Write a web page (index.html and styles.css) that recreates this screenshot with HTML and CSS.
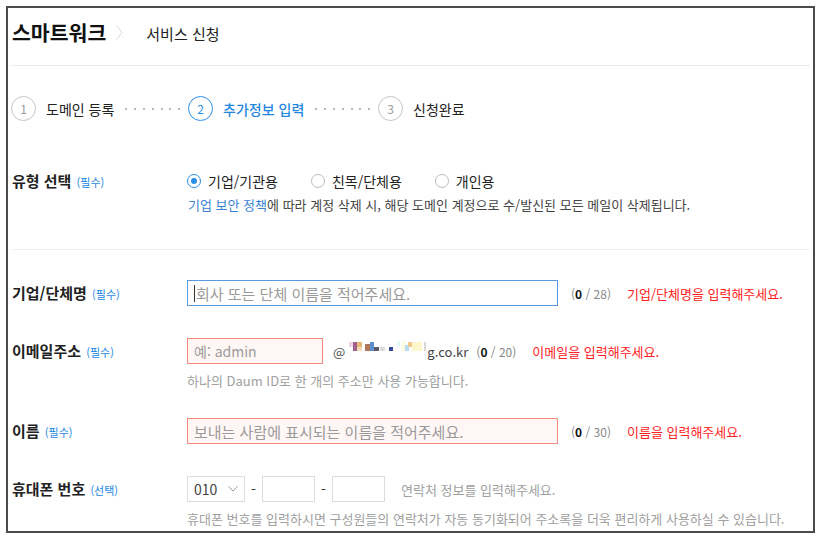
FILE: index.html
```html
<!DOCTYPE html>
<html lang="ko">
<head>
<meta charset="utf-8">
<title>스마트워크 - 서비스 신청</title>
<link rel="stylesheet" href="styles.css">
</head>
<body>
<div class="frame">
  <header class="hdr">
    <h1 class="brand">스마트워크</h1>
    <svg class="chev" width="7" height="15" viewBox="0 0 7 15"><polyline points="0.5,0.5 6,7.5 0.5,14.5" fill="none" stroke="#d9d9d9" stroke-width="1"/></svg>
    <span class="svc">서비스 신청</span>
  </header>

  <ol class="steps">
    <li class="step"><span class="num">1</span><span class="slabel">도메인 등록</span></li>
    <li class="dots"><i></i><i></i><i></i><i></i><i></i><i></i><i></i></li>
    <li class="step on"><span class="num">2</span><span class="slabel">추가정보 입력</span></li>
    <li class="dots"><i></i><i></i><i></i><i></i><i></i><i></i><i></i></li>
    <li class="step"><span class="num">3</span><span class="slabel">신청완료</span></li>
  </ol>

  <section class="type">
    <div class="lbl lbl-type">유형 선택 <em>(필수)</em></div>
    <div class="fld">
      <div class="radios">
        <label class="radio on"><span class="rb"></span>기업/기관용</label>
        <label class="radio"><span class="rb"></span>친목/단체용</label>
        <label class="radio"><span class="rb"></span>개인용</label>
      </div>
      <p class="desc"><span class="link">기업 보안 정책</span>에 따라 계정 삭제 시, 해당 도메인 계정으로 수/발신된 모든 메일이 삭제됩니다.</p>
    </div>
  </section>

  <div class="row r1">
    <div class="lbl">기업/단체명 <em>(필수)</em></div>
    <div class="fld">
      <div class="line">
        <div class="box wide focus"><span class="caret"></span><span class="ph">회사 또는 단체 이름을 적어주세요.</span></div>
        <span class="cnt">(<b>0</b> / 28)</span>
        <span class="errmsg">기업/단체명을 입력해주세요.</span>
      </div>
    </div>
  </div>

  <div class="row r2">
    <div class="lbl">이메일주소 <em>(필수)</em></div>
    <div class="fld">
      <div class="line">
        <div class="box email err"><span class="ph">예: admin</span></div>
        <span class="at">@</span>
        <svg class="blur" width="80" height="16" viewBox="0 0 80 16">
          <rect x="2" y="2" width="5" height="5" fill="#ecd4e4"/>
          <rect x="6" y="2" width="4" height="9" fill="#a0608a"/>
          <rect x="10" y="2" width="5" height="5" fill="#e8b878"/>
          <rect x="10" y="7" width="5" height="4" fill="#f2dcb8"/>
          <rect x="18" y="4" width="5" height="7" fill="#b07a5a"/>
          <rect x="23" y="2" width="4" height="9" fill="#5b8fd0"/>
          <rect x="27" y="7" width="5" height="4" fill="#5a5a6a"/>
          <rect x="33" y="7" width="5" height="4" fill="#dcdcdc"/>
          <rect x="42" y="7" width="4" height="4" fill="#3c4a9a"/>
          <rect x="50" y="2" width="3" height="5" fill="#e0f4fa"/>
          <rect x="55" y="2" width="3" height="9" fill="#fffbe0"/>
          <rect x="58" y="5" width="4" height="6" fill="#b8dcf0"/>
          <rect x="61" y="2" width="6" height="5" fill="#f0c890"/>
          <rect x="65" y="2" width="10" height="9" fill="#fff6cc"/>
          <rect x="77" y="2" width="2" height="9" fill="#d8d8d8"/>
        </svg>
        <span class="dom">g.co.kr</span>
        <span class="cnt cnt-e">(<b>0</b> / 20)</span>
        <span class="errmsg">이메일을 입력해주세요.</span>
      </div>
      <p class="help">하나의 Daum ID로 한 개의 주소만 사용 가능합니다.</p>
    </div>
  </div>

  <div class="row r3">
    <div class="lbl">이름 <em>(필수)</em></div>
    <div class="fld">
      <div class="line">
        <div class="box wide err"><span class="ph">보내는 사람에 표시되는 이름을 적어주세요.</span></div>
        <span class="cnt">(<b>0</b> / 30)</span>
        <span class="errmsg">이름을 입력해주세요.</span>
      </div>
    </div>
  </div>

  <div class="row r4">
    <div class="lbl">휴대폰 번호 <em>(선택)</em></div>
    <div class="fld">
      <div class="line">
        <div class="sel"><span>010</span><svg width="10" height="6" viewBox="0 0 10 6"><polyline points="0.5,0.5 5,5 9.5,0.5" fill="none" stroke="#999" stroke-width="1"/></svg></div>
        <span class="dash">-</span>
        <div class="box tel"></div>
        <span class="dash">-</span>
        <div class="box tel"></div>
        <span class="phhelp">연락처 정보를 입력해주세요.</span>
      </div>
      <p class="help">휴대폰 번호를 입력하시면 구성원들의 연락처가 자동 동기화되어 주소록을 더욱 편리하게 사용하실 수 있습니다.</p>
    </div>
  </div>
</div>
</body>
</html>
```

FILE: styles.css
```css
html, body {
  margin: 0;
  padding: 0;
  background: #fff;
}
body {
  font-family: "Noto Sans CJK KR", "Noto Sans", sans-serif;
  color: #222;
}
.frame {
  margin: 6px;
  width: 809px;
  height: 527px;
  box-sizing: border-box;
  border: 2px solid #4b4b4b;
  padding: 0 3px;
  overflow: hidden;
}
.hdr {
  height: 58px;
  box-sizing: border-box;
  display: flex;
  align-items: flex-start;
  padding: 12px 0 0 1px;
  border-bottom: 1px solid #ebebeb;
}
.brand {
  margin: 0;
  font-size: 20.5px;
  line-height: 24px;
  font-weight: 700;
  color: #111;
}
.chev {
  margin: 5px 0 0 10px;
}
.svc {
  margin: 2px 0 0 23px;
  font-size: 15px;
  line-height: 24px;
  color: #222;
}
.steps {
  list-style: none;
  margin: 30px 0 0;
  padding: 0;
  display: flex;
  align-items: center;
  height: 25px;
}
.step {
  display: flex;
  align-items: center;
}
.num {
  width: 25px;
  height: 25px;
  box-sizing: border-box;
  border: 1px solid #c4c4c4;
  border-radius: 50%;
  display: flex;
  align-items: center;
  justify-content: center;
  font-size: 12px;
  color: #999;
}
.slabel {
  margin-left: 10px;
  font-size: 14px;
  color: #222;
}
.step.on .num {
  border-color: #2a8fe8;
  color: #2a8fe8;
}
.step.on .slabel {
  color: #1f87e0;
  font-weight: 500;
}
.dots {
  display: flex;
  gap: 6.8px;
  margin: 0 8px 0 11px;
}
.dots i {
  width: 2px;
  height: 2px;
  border-radius: 50%;
  background: #a0a0a0;
}
.type {
  display: flex;
  margin-top: 50px;
  padding-bottom: 36px;
  border-bottom: 1px solid #f0f0f0;
}
.lbl {
  width: 176px;
  flex: none;
  box-sizing: border-box;
  padding-left: 1px;
  font-size: 15px;
  font-weight: 600;
  color: #222;
  line-height: 26px;
}
.lbl-type {
  line-height: 20px;
}
.lbl em {
  font-style: normal;
  font-weight: 400;
  font-size: 11px;
  color: #1a86e6;
  margin-left: 1px;
}
.fld {
  display: flex;
  flex-direction: column;
}
.radios {
  display: flex;
  gap: 33px;
  height: 20px;
  align-items: center;
  font-size: 14px;
  color: #222;
}
.radio {
  display: flex;
  align-items: center;
}
.rb {
  width: 14px;
  height: 14px;
  box-sizing: border-box;
  border: 1px solid #bdbdbd;
  border-radius: 50%;
  margin-right: 7px;
  display: inline-flex;
  align-items: center;
  justify-content: center;
}
.radio.on .rb {
  border-color: #2a8fe8;
}
.radio.on .rb::after {
  content: "";
  width: 6px;
  height: 6px;
  border-radius: 50%;
  background: #2a8fe8;
}
.desc {
  margin: 6px 0 0 1px;
  font-size: 13px;
  line-height: 16px;
  color: #444;
}
.link {
  color: #3a83d4;
}
.row {
  display: flex;
  align-items: flex-start;
}
.r1 { margin-top: 30px; }
.r2 { margin-top: 31px; }
.r3 { margin-top: 29px; }
.r4 { margin-top: 31px; }
.line {
  display: flex;
  align-items: center;
  height: 26px;
}
.box {
  height: 26px;
  box-sizing: border-box;
  border: 1px solid #dcdcdc;
  padding: 0 6px;
  display: flex;
  align-items: center;
  font-size: 15px;
  color: #9a9a9a;
  white-space: nowrap;
}
.box.wide { width: 371px; }
.box.email { width: 136px; font-size: 14px; }
.box.tel { width: 53px; }
.box.focus { border-color: #5a98e0; }
.box.err {
  border-color: #f7897d;
  background: #fff7f6;
}
.caret {
  width: 1px;
  height: 17px;
  background: #333;
  margin-right: 1px;
}
.cnt {
  margin-left: 13px;
  font-size: 12px;
  color: #888;
  white-space: nowrap;
}
.cnt b {
  color: #111;
  font-weight: 700;
}
.cnt-e { margin-left: 8px; }
.errmsg {
  margin-left: 16px;
  font-size: 13px;
  color: #f22;
  white-space: nowrap;
}
.at {
  margin-left: 10px;
  font-size: 13px;
  color: #555;
}
.blur {
  margin-left: 2px;
  margin-top: -6px;
}
.dom {
  font-size: 13px;
  color: #444;
}
.help {
  margin: 9px 0 0;
  font-size: 13px;
  line-height: 16px;
  color: #a0a0a0;
  white-space: nowrap;
}
.sel {
  width: 58px;
  height: 26px;
  box-sizing: border-box;
  border: 1px solid #dcdcdc;
  display: flex;
  align-items: center;
  justify-content: space-between;
  padding: 0 6px 0 6px;
  font-size: 14px;
  color: #444;
}
.dash {
  width: 17px;
  text-align: center;
  font-size: 14px;
  color: #333;
}
.phhelp {
  margin-left: 16px;
  font-size: 13px;
  color: #a0a0a0;
}
```
